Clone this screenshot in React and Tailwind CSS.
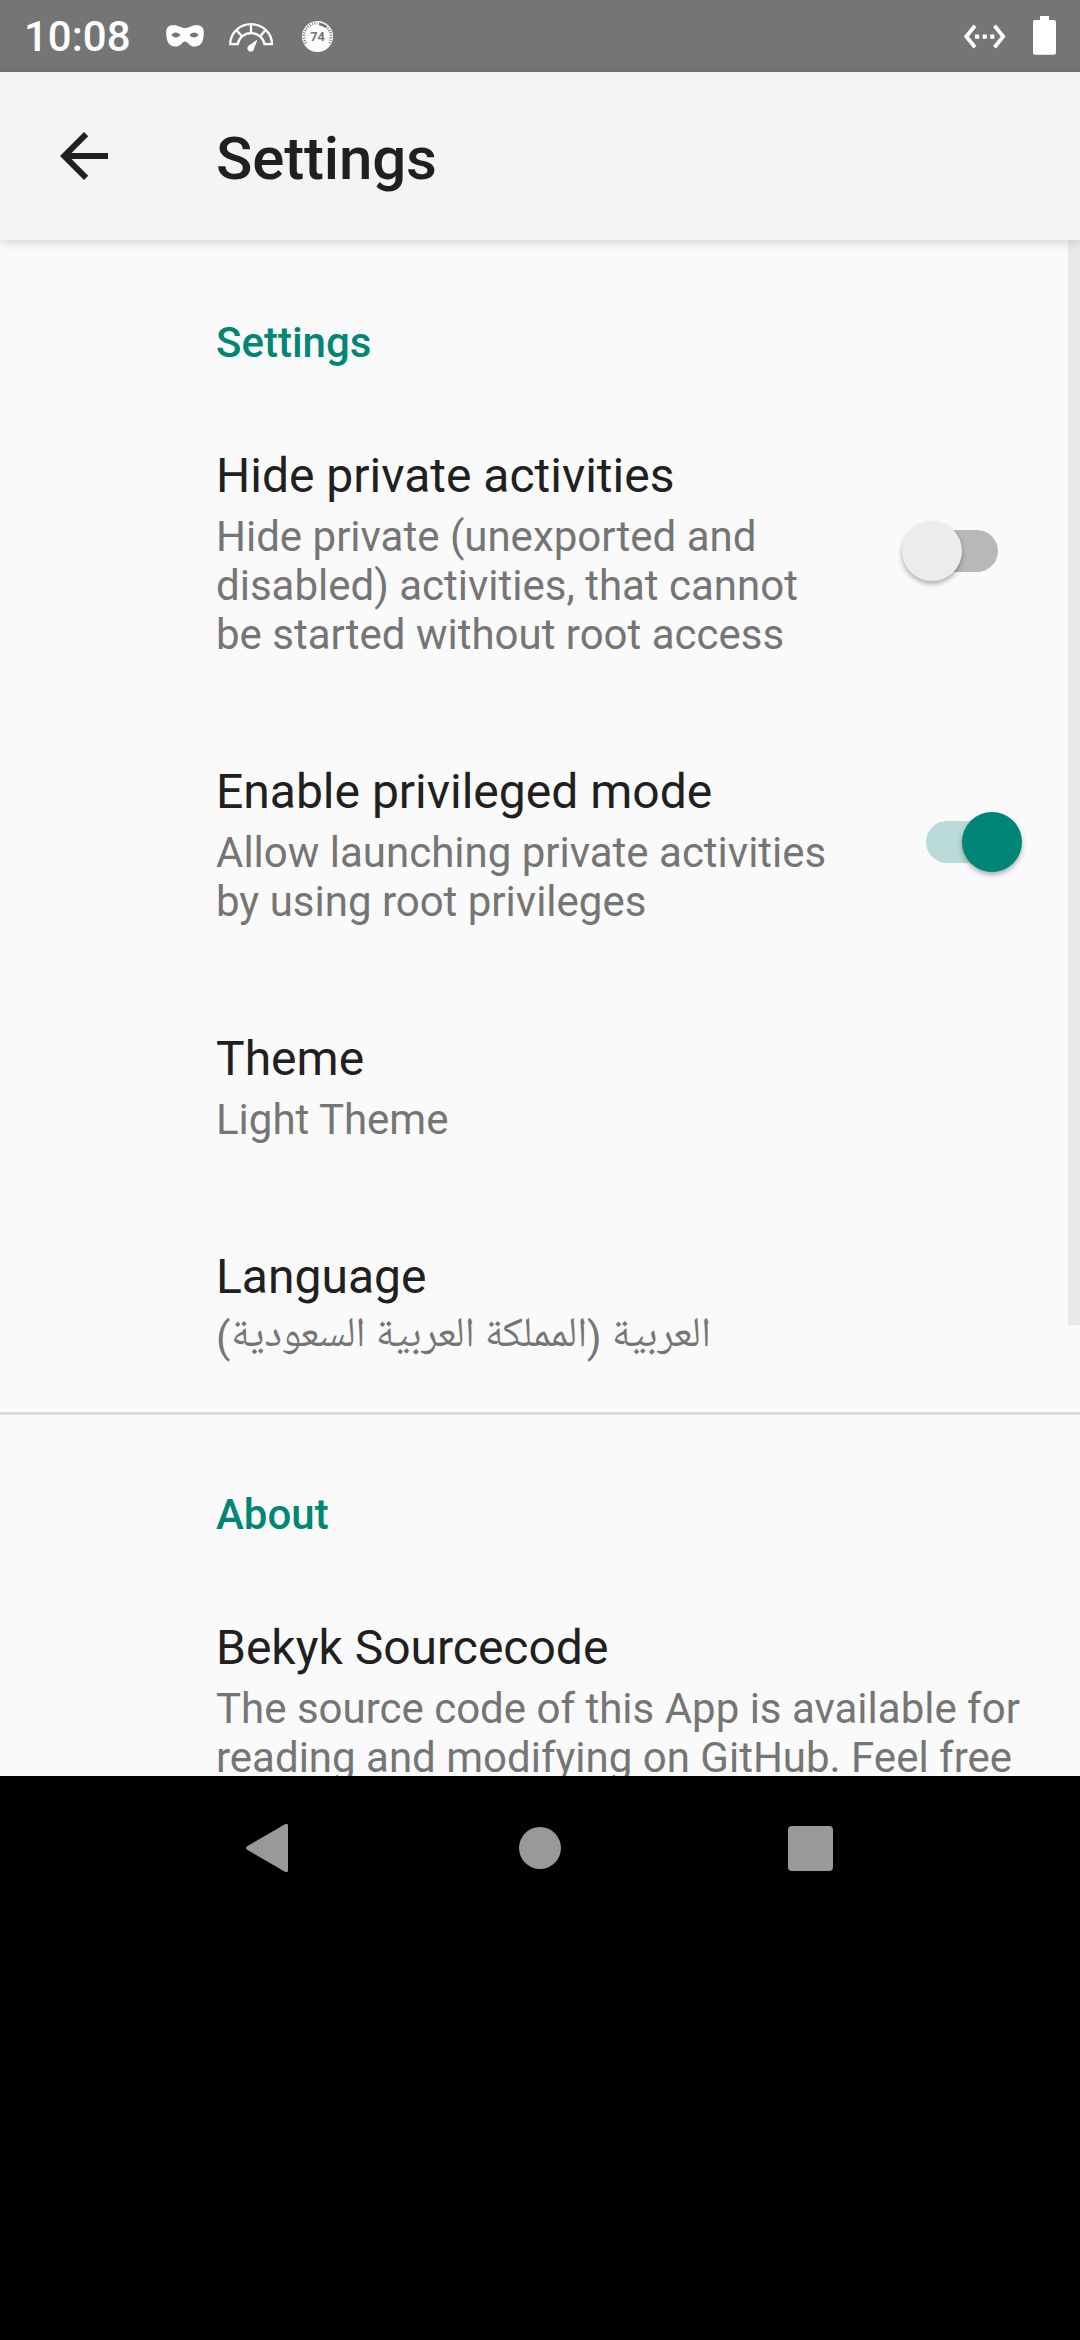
import React from "react";

function StatusBar() {
  return (
    <div className="flex h-[72px] items-center justify-between bg-[#757575] pl-[24px] pr-[24px]">
      <div className="flex h-[72px] items-center text-white">
        <span className="w-[142px] pt-[2px] text-[42px] font-medium leading-[72px]">10:08</span>
        <svg className="h-[72px] w-[38px]" viewBox="166 0 38 72" fill="#fff">
          <path
            fillRule="evenodd"
            d="M166.200 32C166.200 27 169 25.200 174 25.200C179 25.200 181 28 185 28C189 28 191 25.200 196 25.200C201 25.200 203.800 27 203.800 32C203.800 41 201.500 46.600 194.500 46.600C189 46.600 188 41.500 185 41.500C182 41.500 181 46.600 175.500 46.600C168.500 46.600 166.200 41 166.200 32ZM171.500 35C173.500 38.200 178 38.200 180.500 35.300C178 31.600 173.700 31.600 171.500 35ZM198.500 35C196.300 31.600 192 31.600 189.500 35.300C192 38.200 196.500 38.200 198.500 35Z"
          />
        </svg>
        <svg className="ml-[24px] h-[72px] w-[46px]" viewBox="228 0 46 72" fill="none" stroke="#fff">
          <path
            strokeWidth="2.300"
            d="M230.200 44.200A20.900 20 0 0 1 272 44.200H264.500A13.500 12.500 0 0 0 237.700 44.200Z"
          />
          <path strokeWidth="2.300" d="M236 29.500L241.500 36M251 24V32M266 29.500L260.500 36" />
          <path fill="#fff" stroke="none" d="M257.500 39.500L254.200 48.300A3.400 3.400 0 1 1 248.300 46Z" />
        </svg>
        <svg className="ml-[27px] h-[72px] w-[34px]" viewBox="301 0 34 72">
          <circle cx="317.500" cy="36.500" r="15.500" fill="#fff" />
          <path
            d="M305.800 43.300A13.500 13.500 0 0 1 317.500 23"
            fill="none"
            stroke="#757575"
            strokeWidth="2.600"
            strokeDasharray="1 1.500"
          />
          <path d="M319 23.800A13 13 0 0 1 326.500 27.200" fill="none" stroke="#757575" strokeWidth="2.800" />
          <path
            d="M327.500 28A13.500 13.500 0 0 1 329.200 43.300"
            fill="none"
            stroke="#757575"
            strokeWidth="2.600"
            strokeDasharray="1 1.500"
          />
          <text x="317.500" y="41.300" textAnchor="middle" fontSize="12.800" fontWeight="700" fill="#757575">
            74
          </text>
        </svg>
      </div>
      <div className="flex h-[72px] items-center">
        <svg className="h-[72px] w-[42px]" viewBox="964 0 42 72" fill="none" stroke="#fff">
          <path strokeWidth="3.800" d="M975 25.700L966.300 36.500L975 47.300M994.500 25.700L1003.200 36.500L994.500 47.300" />
          <path fill="#fff" stroke="none" d="M975 34.500h4.200v4.200h-4.200zM982.600 34.500h4.200v4.200h-4.200zM990.200 34.500h4.200v4.200h-4.200z" />
        </svg>
        <svg className="ml-[27px] h-[72px] w-[23px]" viewBox="1033 0 23 72" fill="#fff">
          <path d="M1040 16H1049V20H1054A2 2 0 0 1 1056 22V52.700A2 2 0 0 1 1054 54.700H1035A2 2 0 0 1 1033 52.700V22A2 2 0 0 1 1035 20H1040Z" />
        </svg>
      </div>
    </div>
  );
}

function AppBar() {
  return (
    <header className="relative z-10 flex h-[168px] items-center bg-[#f4f4f4] shadow-[0_2px_10px_rgba(0,0,0,0.16)]">
      <svg className="ml-[48px] h-[72px] w-[72px]" viewBox="0 0 24 24" fill="#202020">
        <path d="M20 11H7.830l5.590-5.590L12 4l-8 8 8 8 1.410-1.410L7.830 13H20v-2z" />
      </svg>
      <h1 className="ml-[96px] mt-[6px] text-[60px] font-medium leading-[72px] tracking-[-0.15px] text-[#202020]">
        Settings
      </h1>
    </header>
  );
}

function Switch({ on }) {
  return (
    <div className="relative mb-[2px] mr-[57px] h-[60px] w-[123px] shrink-0">
      <div
        className={
          "absolute left-[26px] top-[9px] h-[42px] w-[72px] rounded-full " + (on ? "bg-[#b8dbd7]" : "bg-[#b8b8b8]")
        }
      />
      <div
        className={
          "absolute top-0 h-[60px] w-[60px] rounded-full shadow-[0_3px_5px_rgba(0,0,0,0.3)] " +
          (on ? "left-[61.500px] bg-[#008577]" : "left-[2px] bg-[#ececec]")
        }
      />
    </div>
  );
}

function Category({ children }) {
  return <h2 className="pl-[216px] text-[42px] font-medium leading-[49px] text-[#008577]">{children}</h2>;
}

function Preference({ title, lines, control, rtl }) {
  return (
    <div className="flex items-center justify-between pl-[216px]">
      <div>
        <div className="text-[48px] leading-[64px] text-[#202020]">{title}</div>
        <div className="mt-[4px] whitespace-nowrap text-[42px] leading-[49px] text-[#757575]">
          {lines.map((line) => (
            <div
              key={line}
              dir={rtl ? "rtl" : "ltr"}
              className={rtl ? "h-[49px] tracking-normal [word-spacing:-0.8px]" : "h-[49px]"}
            >
              {line}
            </div>
          ))}
        </div>
      </div>
      {control}
    </div>
  );
}

function NavBar() {
  return (
    <nav className="flex h-[144px] items-center justify-center gap-[210px] bg-black">
      <svg className="h-[60px] w-[60px]" viewBox="240 1818 60 60" fill="#999">
        <path d="M284.500 1824.500Q288 1822.500 288 1826V1870Q288 1873.500 284.500 1871.500L247.500 1850Q244.500 1848 247.500 1846Z" />
      </svg>
      <div className="flex h-[60px] w-[60px] items-center justify-center">
        <div className="h-[42px] w-[42px] rounded-full bg-[#999]" />
      </div>
      <div className="flex h-[60px] w-[60px] items-center justify-center">
        <div className="h-[45px] w-[45px] rounded-[4px] bg-[#999]" />
      </div>
    </nav>
  );
}

export default function App() {
  return (
    <div className="h-[2340px] w-[1080px] overflow-hidden bg-black font-[Roboto,'Noto_Naskh_Arabic_UI','Noto_Naskh_Arabic','Noto_Sans_Arabic','DejaVu_Sans',sans-serif]">
      <StatusBar />
      <AppBar />
      <main className="relative h-[1536px] overflow-hidden bg-[#fafafa] pt-[78px]">
        <Category>Settings</Category>
        <div className="mt-[77px] flex flex-col gap-[101px]">
          <Preference
            title="Hide private activities"
            lines={["Hide private (unexported and", "disabled) activities, that cannot", "be started without root access"]}
            control={<Switch />}
          />
          <Preference
            title="Enable privileged mode"
            lines={["Allow launching private activities", "by using root privileges"]}
            control={<Switch on />}
          />
          <Preference title="Theme" lines={["Light Theme"]} />
          <Preference title="Language" rtl lines={["العربية (المملكة العربية السعودية)"]} />
        </div>
        <div className="mb-[75px] mt-[50px] h-[3px] bg-[#dcdcdc]" />
        <Category>About</Category>
        <div className="mt-[77px]">
          <Preference
            title="Bekyk Sourcecode"
            lines={["The source code of this App is available for", "reading and modifying on GitHub. Feel free"]}
          />
        </div>
        <div className="absolute right-0 top-0 h-[1085px] w-[12px] bg-[#e9e9e9]" />
      </main>
      <NavBar />
    </div>
  );
}
